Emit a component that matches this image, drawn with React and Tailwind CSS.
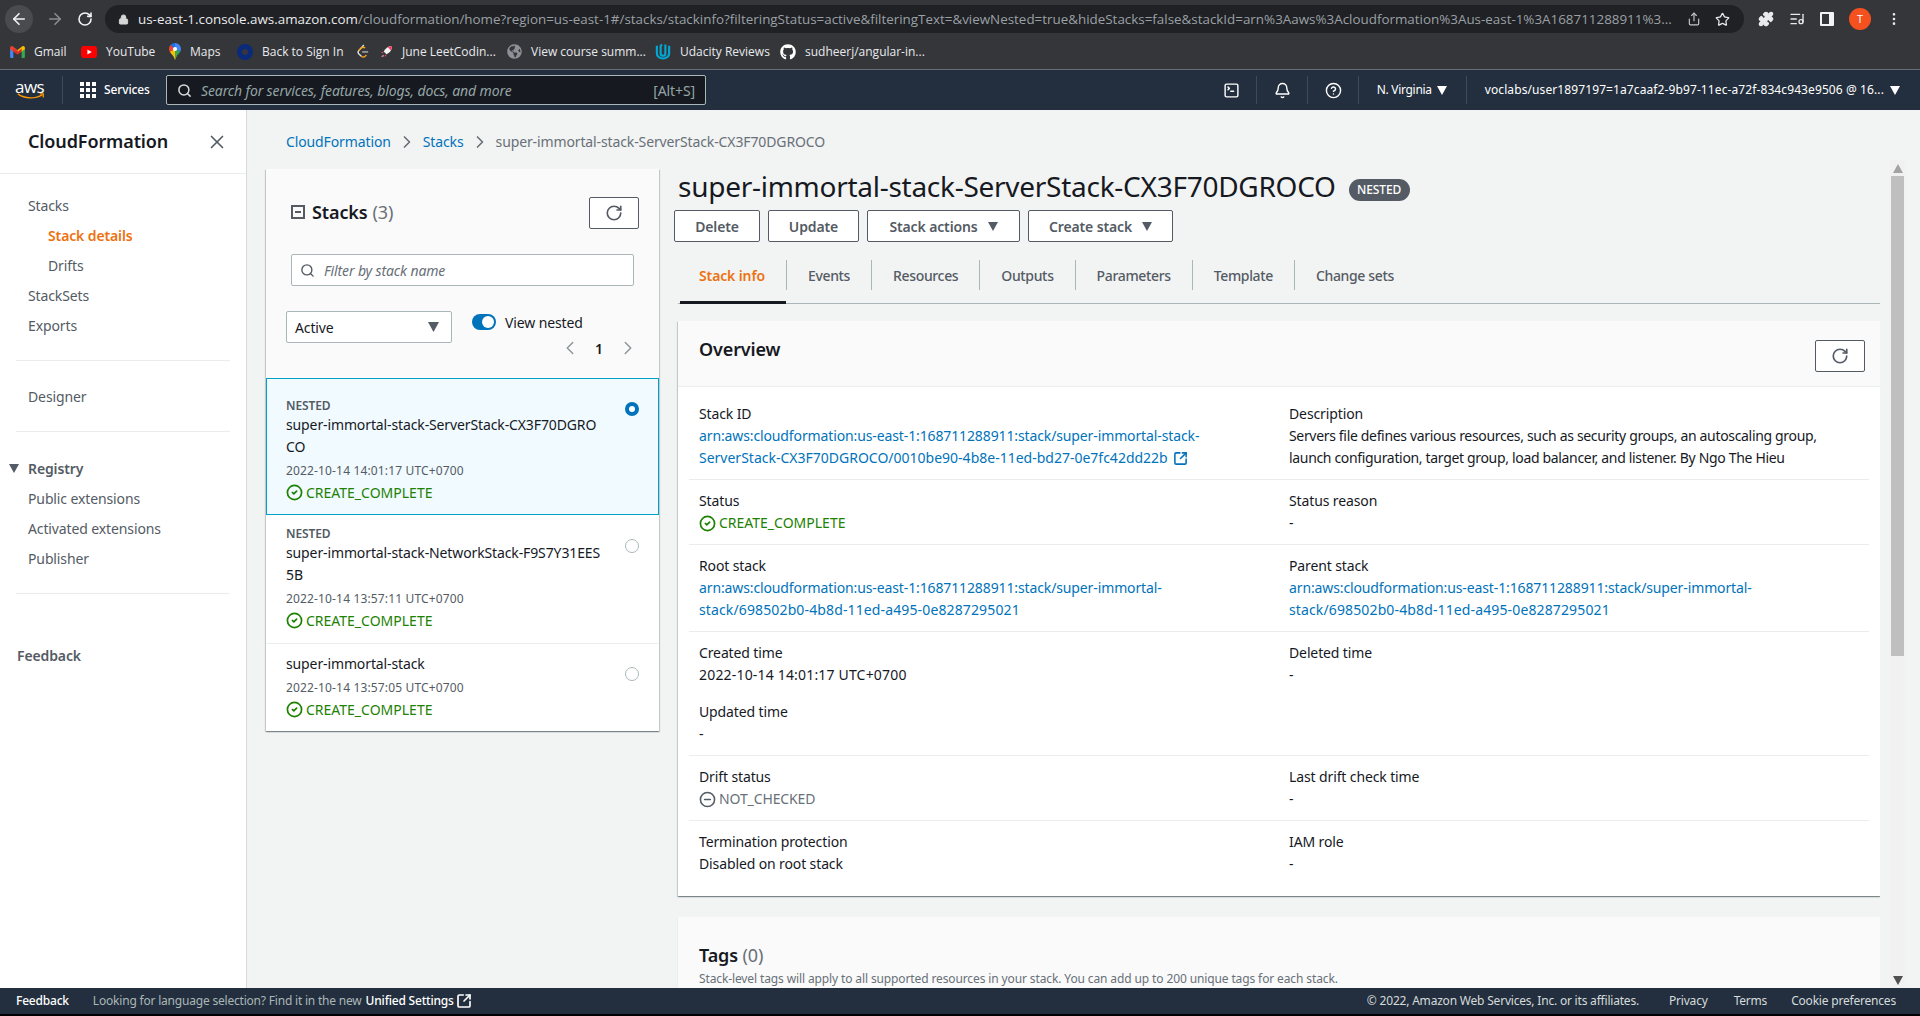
import React from 'react'
import {
  ArrowLeft, ArrowRight, RotateCw, Lock, Share, Star, Puzzle, ListMusic, MoreVertical,
  Search, X, ChevronRight, ChevronLeft, Bell, CircleHelp, SquareTerminal, SquareArrowOutUpRight, CircleCheck, CircleMinus,
} from 'lucide-react'
import { FaGithub, FaGlobeAmericas } from 'react-icons/fa'

const FONT = 'font-["Noto_Sans",sans-serif]'

const Caret = ({ className = '' }) => (
  <svg viewBox="0 0 10 9" className={`w-[10px] h-[9px] fill-current ${className}`}><path d="M0 0h10L5 9z" /></svg>
)

const GmailIcon = () => (
  <svg viewBox="0 0 16 13" className="w-[15px] h-[12px]">
    <path d="M0 2v10a1 1 0 0 0 1 1h2.5V6z" fill="#4285f4" />
    <path d="M16 2v10a1 1 0 0 1-1 1h-2.5V6z" fill="#34a853" />
    <path d="M0 2c0-1.6 1.8-2.5 3-1.5L8 4.4 8 8 3.500 6 0 3.500z" fill="#ea4335" />
    <path d="M16 2c0-1.600-1.800-2.500-3-1.500L8 4.400V8l4.500-2L16 3.500z" fill="#fbbc04" />
    <path d="M3.500 2.800 8 6.200l4.500-3.400V6L8 9.400 3.500 6z" fill="#d93025" />
  </svg>
)

const YoutubeIcon = () => (
  <svg viewBox="0 0 16 12" className="w-[16px] h-[12px]">
    <rect width="16" height="12" rx="3" fill="#f00" />
    <path d="M6.400 3.400v5.200L10.800 6z" fill="#fff" />
  </svg>
)

const MapsIcon = () => (
  <svg viewBox="0 0 12 17" className="w-[12px] h-[17px]">
    <path d="M6 0a6 6 0 0 1 6 6c0 1-.3 2-.8 2.800L6 6z" fill="#4285f4" />
    <path d="M6 0a6 6 0 0 0-4.600 2.100L6 6z" fill="#1a73e8" />
    <path d="M1.400 2.100A6 6 0 0 0 .8 8.800L6 6z" fill="#ea4335" />
    <path d="M.8 8.800C2 11 4.800 12.500 6 17l2-5-2-6z" fill="#fbbc04" />
    <path d="M11.200 8.800C10 11 7 12.500 6 17V6z" fill="#34a853" />
    <circle cx="6" cy="6" r="2.100" fill="#fff" />
  </svg>
)

const RingIcon = () => <span className="w-[16px] h-[16px] rounded-full border-[5px] border-[#0a2a7c] inline-block" />

const LeetIcon = () => (
  <svg viewBox="0 0 14 16" className="w-[12px] h-[15px]" fill="none" strokeWidth="1.600">
    <path d="M8 .5 2 7c-1 1.300-1 2.500 0 3.600L5 13.500" stroke="#e5e5e5" />
    <path d="M5 13.500c1.500 1.300 3 1.300 4.500 0L11 12" stroke="#f89f1b" />
    <path d="M2 7l3-3c1.500-1.300 3-1.300 4.500 0" stroke="#f89f1b" />
    <path d="M6 8.500h7" stroke="#b3b3b3" />
  </svg>
)

const RocketIcon = () => (
  <svg viewBox="0 0 14 14" className="w-[13px] h-[13px]">
    <path d="M13 1c-4 0-7 2-9 6l3 3c4-2 6-5 6-9z" fill="#f4f4f4" />
    <path d="M13 1c-1.800 0-3.400.4-4.800 1.200l3.600 3.600C12.600 4.400 13 2.800 13 1z" fill="#ef4665" />
    <path d="M4 7 1 8l2 1zM7 10l-1 3-1-2z" fill="#ef4665" />
    <path d="M3.500 10.500 1 13l3.500-1z" fill="#f59fb0" />
  </svg>
)

const UdacityIcon = () => (
  <svg viewBox="0 0 16 18" className="w-[16px] h-[17px]" fill="none" stroke="#02a9d6" strokeWidth="2.200">
    <path d="M1.500 3v8c0 3 2.800 5.500 6.500 5.500s6.500-2.500 6.500-5.500V3" />
    <path d="M7 1.500 5.500 3v8c0 1.500 1 2.500 2.500 2.500s2.500-1 2.500-2.500V1.500" />
  </svg>
)

const bookmarks = [
  { label: 'Gmail', icon: <GmailIcon />, width: 'w-[71px]' },
  { label: 'YouTube', icon: <YoutubeIcon />, width: 'w-[88px]' },
  { label: 'Maps', icon: <MapsIcon />, width: 'w-[68px]' },
  { label: 'Back to Sign In', icon: <RingIcon />, width: 'w-[120px]' },
  { label: 'June LeetCodin...', icon: <><LeetIcon /><span className="w-[11px]" /><RocketIcon /></>, width: 'w-[150px]' },
  { label: 'View course summ...', icon: <FaGlobeAmericas className="w-[15px] h-[15px] text-[#8d9096]" />, width: 'w-[148px]' },
  { label: 'Udacity Reviews', icon: <UdacityIcon />, width: 'w-[125px]' },
  { label: 'sudheerj/angular-in...', icon: <FaGithub className="w-[16px] h-[16px] text-white" />, width: 'w-[150px]' },
]

const BrowserChrome = () => (
  <div className="bg-[#35363a] shrink-0 h-[69px] tracking-normal font-['Open_Sans',sans-serif]">
    <div className="flex items-center h-[38px] pt-[5px] pb-[5px]">
      <div className="w-[105px] flex items-center pl-[5px] shrink-0">
        <span className="w-[28px] h-[28px] rounded-full bg-[#4a4b4f] flex items-center justify-center">
          <ArrowLeft className="w-[18px] h-[18px] text-[#f1f3f4]" strokeWidth={2.200} />
        </span>
        <ArrowRight className="w-[18px] h-[18px] ml-[13px] text-[#8b8c8f]" strokeWidth={2.200} />
        <RotateCw className="w-[16px] h-[16px] ml-[13px] text-[#f1f3f4]" strokeWidth={2.400} />
      </div>
      <div className="w-[1639px] h-[28px] rounded-full bg-[#202124] flex items-center pl-[13px] pr-[14px] shrink-0">
        <Lock className="w-[11px] h-[11px] text-[#d5d6d8] shrink-0" fill="#d5d6d8" />
        <div className="ml-[9px] text-[13.400px] leading-[20px] whitespace-nowrap text-[#9aa0a6]">
          <span className="text-[#e8eaed]">us-east-1.console.aws.amazon.com</span>/cloudformation/home?region=us-east-1#/stacks/stackinfo?filteringStatus=active&filteringText=&viewNested=true&hideStacks=false&stackId=arn%3Aaws%3Acloudformation%3Aus-east-1%3A168711288911%3...
        </div>
        <Share className="w-[14px] h-[14px] ml-auto text-[#c4c7c9] shrink-0" />
        <Star className="w-[15px] h-[15px] ml-[14px] text-[#e8eaed] shrink-0" />
      </div>
      <div className="flex items-center pl-[14px] gap-[15px] text-[#e8eaed]">
        <Puzzle className="w-[16px] h-[16px]" fill="#e8eaed" />
        <ListMusic className="w-[16px] h-[16px]" />
        <span className="w-[14px] h-[14px] border-[2px] border-[#f1f3f4] border-r-[5px] rounded-[1px]" />
        <span className="w-[22px] h-[22px] rounded-full bg-[#f4511e] text-white text-[11px] flex items-center justify-center">T</span>
        <MoreVertical className="w-[16px] h-[16px]" />
      </div>
    </div>
    <div className="flex items-center h-[27px] pl-[10px]">
      {bookmarks.map((b) => (
        <div key={b.label} className={`flex items-center shrink-0 ${b.width}`}>
          <span className="flex items-center w-auto mr-[9px]">{b.icon}</span>
          <span className="text-[12px] text-[#e8eaed] whitespace-nowrap">{b.label}</span>
        </div>
      ))}
    </div>
  </div>
)

const AwsNav = () => (
  <div className={`bg-[#232f3e] h-[41px] border-t border-[#6b6e72] shrink-0 flex items-center text-white ${FONT}`}>
    <div className="w-[62px] shrink-0 pl-[15px] flex flex-col items-start">
      <span className="text-[17px] leading-[14px] tracking-[-0.5px] font-['Open_Sans',sans-serif]">aws</span>
      <svg viewBox="0 0 32 8" className="w-[32px] h-[7px] -mt-[1px]" fill="none" stroke="#ff9900" strokeWidth="1.500">
        <path d="M1 1c8 6 20 6 28 1" /><path d="M26 1h4v4" />
      </svg>
    </div>
    <span className="w-px h-[28px] bg-[#3f4a58]" />
    <div className="w-[103px] shrink-0 pl-[17px] flex items-center">
      <span className="grid grid-cols-3 gap-[2px] w-[16px]">
        {Array.from({ length: 9 }).map((_, i) => <span key={i} className="w-[4px] h-[4px] bg-white" />)}
      </span>
      <span className="ml-[8px] text-[12px] font-medium">Services</span>
    </div>
    <div className="w-[540px] h-[30px] rounded-[2px] border border-[#aab7b8] bg-[#16191f] flex items-center pl-[10px] pr-[10px] shrink-0">
      <Search className="w-[15px] h-[15px] text-[#d5dbdb]" strokeWidth={2.400} />
      <span className="ml-[9px] text-[14px] italic text-[#95a5a6]">Search for services, features, blogs, docs, and more</span>
      <span className="ml-auto text-[14px] text-[#95a5a6]">[Alt+S]</span>
    </div>
    <div className="ml-auto flex items-center h-[28px] pr-[20px]">
      <span className="pr-[16px]"><SquareTerminal className="w-[17px] h-[17px]" /></span>
      <span className="w-px h-[28px] bg-[#3f4a58]" />
      <span className="pl-[17px] pr-[16px]"><Bell className="w-[17px] h-[17px]" /></span>
      <span className="w-px h-[28px] bg-[#3f4a58]" />
      <span className="pl-[17px] pr-[16px]"><CircleHelp className="w-[17px] h-[17px]" /></span>
      <span className="w-px h-[28px] bg-[#3f4a58]" />
      <span className="w-[107px] pl-[18px] flex items-center text-[12px] gap-[5px] whitespace-nowrap tracking-[-0.3px]">N. Virginia <Caret /></span>
      <span className="w-px h-[28px] bg-[#3f4a58]" />
      <span className="pl-[18px] flex items-center text-[12px] gap-[6px] whitespace-nowrap tracking-[0.1px]">voclabs/user1897197=1a7caaf2-9b97-11ec-a72f-834c943e9506 @ 16... <Caret /></span>
    </div>
  </div>
)

const NavItem = ({ children, active, indent }) => (
  <div className={`h-[30px] flex items-center text-[14px] ${indent ? 'pl-[48px]' : 'pl-[28px]'} ${active ? 'text-[#ec7211] font-semibold' : 'text-[#545b64]'}`}>{children}</div>
)

const Sidebar = () => (
  <div className="w-[247px] shrink-0 bg-white border-r border-[#d5dbdb] flex flex-col">
    <div className="h-[64px] shrink-0 border-b border-[#eaeded] flex items-center pl-[28px] pr-[18px] justify-between">
      <span className="text-[18px] font-semibold text-[#16191f]">CloudFormation</span>
      <X className="w-[22px] h-[22px] text-[#545b64]" strokeWidth={1.800} />
    </div>
    <div className="pt-[16px]">
      <NavItem>Stacks</NavItem>
      <NavItem active indent>Stack details</NavItem>
      <NavItem indent>Drifts</NavItem>
      <NavItem>StackSets</NavItem>
      <NavItem>Exports</NavItem>
    </div>
    <div className="mx-[16px] mt-[20px] border-t border-[#eaeded]" />
    <div className="pt-[20px]"><NavItem>Designer</NavItem></div>
    <div className="mx-[16px] mt-[20px] border-t border-[#eaeded]" />
    <div className="pt-[21px]">
      <div className="h-[30px] flex items-center pl-[9px] text-[14px] font-semibold text-[#545b64]">
        <Caret className="w-[10px] mr-[9px]" />Registry
      </div>
      <NavItem>Public extensions</NavItem>
      <NavItem>Activated extensions</NavItem>
      <NavItem>Publisher</NavItem>
    </div>
    <div className="mx-[16px] mt-[20px] border-t border-[#eaeded]" />
    <div className="pl-[17px] mt-[51px] text-[14px] font-semibold leading-[22px] text-[#545b64]">Feedback</div>
  </div>
)

const Status = () => (
  <div className="flex items-center h-[22px] text-[14px] tracking-normal text-[#1d8102]">
    <CircleCheck className="w-[17px] h-[17px] mr-[3px]" strokeWidth={2.400} />CREATE_COMPLETE
  </div>
)

const StackRow = ({ nested, name, tail, date, selected, box, radio }) => (
  <div className={`flex pl-[19px] pr-[19px] ${box} ${selected ? 'bg-[#f1faff] border border-[#00a1c9]' : 'bg-white border-x border-transparent'}`}>
    <div className="w-[340px] text-[#16191f]">
      {nested && <div className="text-[12px] leading-[16px] font-semibold text-[#545b64]">NESTED</div>}
      <div className="text-[14px] leading-[22px] break-all">{name}{tail && <br />}{tail}</div>
      <div className="text-[12px] leading-[20px] mt-[3px] tracking-[0.15px] text-[#545b64]">{date}</div>
      <Status />
    </div>
    <span className={`ml-auto w-[14px] h-[14px] rounded-full shrink-0 ${radio} ${selected ? 'border-[4px] border-[#0073bb] bg-white' : 'border border-[#aab7b8] bg-white'}`} />
  </div>
)

const RefreshButton = () => (
  <span className="w-[50px] h-[32px] border border-[#545b64] rounded-[2px] bg-white flex items-center justify-center shrink-0">
    <RotateCw className="w-[18px] h-[18px] text-[#545b64]" strokeWidth={2.200} />
  </span>
)

const StacksPanel = () => (
  <div className="w-[393px] shrink-0 self-start bg-[#fafafa] shadow-[0_1px_1px_0_rgba(0,28,36,0.3),1px_1px_1px_0_rgba(0,28,36,0.15),-1px_1px_1px_0_rgba(0,28,36,0.15)]">
    <div className="pl-[25px] pr-[20px] pt-[28px] flex items-center justify-between">
      <div className="flex items-center -mt-[2px]">
        <span className="w-[14px] h-[14px] border-[2px] border-[#545b64] flex items-center justify-center mr-[7px]"><span className="w-[6px] h-[2px] bg-[#545b64]" /></span>
        <span className="text-[18px] font-semibold text-[#16191f]">Stacks</span>
        <span className="text-[18px] text-[#687078] ml-[5px]">(3)</span>
      </div>
      <RefreshButton />
    </div>
    <div className="pl-[25px] pr-[25px] mt-[25px]">
      <div className="h-[32px] w-[343px] border border-[#aab7b8] rounded-[2px] bg-white flex items-center pl-[8px]">
        <Search className="w-[15px] h-[15px] text-[#545b64]" strokeWidth={2.200} />
        <span className="ml-[9px] text-[14px] italic text-[#687078]">Filter by stack name</span>
      </div>
    </div>
    <div className="pl-[20px] pr-[20px] mt-[25px] flex h-[67px]">
      <div className="w-[166px] h-[32px] border border-[#aab7b8] rounded-[2px] bg-white flex items-center justify-between pl-[8px] pr-[12px] text-[14px] text-[#16191f]">
        Active<Caret className="w-[11px] h-[10px] text-[#545b64]" />
      </div>
      <div className="ml-[20px] flex-1 flex flex-col">
        <div className="flex items-center h-[22px]">
          <span className="w-[24px] h-[16px] rounded-full bg-[#0073bb] flex items-center justify-end pr-[2px]"><span className="w-[12px] h-[12px] rounded-full bg-white" /></span>
          <span className="ml-[9px] text-[14px] text-[#16191f]">View nested</span>
        </div>
        <div className="mt-[4px] flex items-center justify-end gap-[11px] text-[#687078]">
          <ChevronLeft className="w-[22px] h-[22px] text-[#879596]" strokeWidth={1.500} />
          <span className="w-[14px] text-center text-[14px] font-semibold text-[#16191f]">1</span>
          <ChevronRight className="w-[22px] h-[22px] text-[#879596]" strokeWidth={1.500} />
        </div>
      </div>
    </div>
    <StackRow selected nested box="pt-[19px] pb-[11px]" radio="mt-[4px]" name="super-immortal-stack-ServerStack-CX3F70DGRO" tail="CO" date="2022-10-14 14:01:17 UTC+0700" />
    <StackRow nested box="pt-[11px] pb-[12px] border-b border-b-[#eaeded]" radio="mt-[13px]" name="super-immortal-stack-NetworkStack-F9S7Y31EES" tail="5B" date="2022-10-14 13:57:11 UTC+0700" />
    <StackRow box="pt-[9px] pb-[11px]" radio="mt-[14px]" name="super-immortal-stack" date="2022-10-14 13:57:05 UTC+0700" />
  </div>
)

const Field = ({ label, children, className = '' }) => (
  <div className={`text-[14px] leading-[22px] text-[#16191f] ${className}`}>
    <div>{label}</div>
    <div>{children}</div>
  </div>
)

const Row = ({ children, first, last, pb = 'pb-[10px]' }) => (
  <div className={`grid grid-cols-[590px_1fr] pl-[10px] ${first ? 'pt-[16px]' : 'pt-[10px]'} ${pb} ${last ? '' : 'border-b border-[#eaeded]'}`}>{children}</div>
)

const Button = ({ children, w }) => (
  <span className={`h-[32px] border border-[#545b64] rounded-[2px] bg-white flex items-center justify-center gap-[10px] text-[14px] font-semibold text-[#545b64] ${w}`}>{children}</span>
)

const tabs = ['Events', 'Resources', 'Outputs', 'Parameters', 'Template', 'Change sets']

const Overview = () => (
  <div className="bg-white shadow-[0_1px_1px_0_rgba(0,28,36,0.3),1px_1px_1px_0_rgba(0,28,36,0.15),-1px_1px_1px_0_rgba(0,28,36,0.15)]">
    <div className="h-[66px] bg-[#fafafa] border-b border-[#eaeded] flex items-center justify-between pl-[21px] pr-[15px]">
      <span className="text-[18px] font-semibold text-[#16191f] mb-[8px]">Overview</span>
      <span className="mt-[5px]"><RefreshButton /></span>
    </div>
    <div className="px-[11px]">
      <Row first>
        <Field label="Stack ID">
          <span className="text-[#0073bb]">arn:aws:cloudformation:us-east-1:168711288911:stack/super-immortal-stack-<br /><span className="tracking-normal">ServerStack-CX3F70DGROCO/0010be90-4b8e-11ed-bd27-0e7fc42dd22b</span> <SquareArrowOutUpRight className="inline w-[15px] h-[15px] ml-[2px] -mt-[2px]" strokeWidth={2.500} /></span>
        </Field>
        <Field label="Description">
          <span className="tracking-[-0.33px]">Servers file defines various resources, such as security groups, an autoscaling group,<br />launch configuration, target group, load balancer, and listener. By Ngo The Hieu</span>
        </Field>
      </Row>
      <Row>
        <Field label="Status"><Status /></Field>
        <Field label="Status reason">-</Field>
      </Row>
      <Row>
        <Field label="Root stack"><span className="text-[#0073bb]">arn:aws:cloudformation:us-east-1:168711288911:stack/super-immortal-<br /><span className="tracking-[0.13px]">stack/698502b0-4b8d-11ed-a495-0e8287295021</span></span></Field>
        <Field label="Parent stack"><span className="text-[#0073bb]">arn:aws:cloudformation:us-east-1:168711288911:stack/super-immortal-<br /><span className="tracking-[0.13px]">stack/698502b0-4b8d-11ed-a495-0e8287295021</span></span></Field>
      </Row>
      <Row>
        <div>
          <Field label="Created time"><span className="tracking-[0.18px]">2022-10-14 14:01:17 UTC+0700</span></Field>
          <Field label="Updated time" className="mt-[15px]">-</Field>
        </div>
        <Field label="Deleted time">-</Field>
      </Row>
      <Row>
        <Field label="Drift status">
          <span className="flex items-center text-[#687078]"><CircleMinus className="w-[17px] h-[17px] mr-[3px] text-[#545b64]" strokeWidth={2.200} />NOT_CHECKED</span>
        </Field>
        <Field label="Last drift check time">-</Field>
      </Row>
      <Row last pb="pb-[21px]">
        <Field label="Termination protection">Disabled on root stack</Field>
        <Field label="IAM role">-</Field>
      </Row>
    </div>
  </div>
)

const DetailColumn = () => (
  <div className="flex-1 min-w-0">
    <div className="flex items-center h-[41px] pb-[8px]">
      <h1 className="text-[28px] leading-[36px] font-normal text-[#16191f] whitespace-nowrap tracking-[-0.27px]">super-immortal-stack-ServerStack-CX3F70DGROCO</h1>
      <span className="ml-[13px] mt-[8px] h-[22px] w-[61px] rounded-full bg-[#545b64] text-white text-[12px] font-medium flex items-center justify-center">NESTED</span>
    </div>
    <div className="flex gap-[8px] -ml-[4px]">
      <Button w="w-[86px]">Delete</Button>
      <Button w="w-[91px]">Update</Button>
      <Button w="w-[153px]">Stack actions <Caret /></Button>
      <Button w="w-[145px]">Create stack <Caret /></Button>
    </div>
    <div className="mt-[18px] h-[44px] flex items-start border-b border-[#aab7b8]">
      <div className="w-[106px] ml-[2px] h-[44px] border-b-[3px] border-[#16191f] -mb-px">
        <div className="h-[30px] flex items-center pl-[19px] text-[14px] font-semibold text-[#ec7211]">Stack info</div>
      </div>
      {tabs.map((t) => (
        <div key={t} className="h-[30px] flex items-center px-[21px] border-l border-[#aab7b8] text-[14px] font-medium tracking-[-0.35px] text-[#545b64] whitespace-nowrap">{t}</div>
      ))}
    </div>
    <div className="mt-[17px]"><Overview /></div>
    <div className="mt-[21px] bg-[#fafafa] h-[100px] pl-[21px] pt-[26px] shadow-[0_1px_1px_0_rgba(0,28,36,0.15)]">
      <div className="text-[18px] leading-[24px] font-semibold text-[#16191f]">Tags <span className="font-normal text-[#687078]">(0)</span></div>
      <div className="text-[12px] leading-[18px] mt-[3px] text-[#687078]">Stack-level tags will apply to all supported resources in your stack. You can add up to 200 unique tags for each stack.</div>
    </div>
  </div>
)

const Scrollbar = () => (
  <div className="w-[15px] shrink-0 bg-[#f1f1f1] flex flex-col items-center">
    <div className="h-[16px] flex items-center justify-center text-[#a3a3a3]"><Caret className="w-[8px] h-[5px] rotate-180" /></div>
    <div className="w-[13px] h-[480px] bg-[#bfbfbf]" />
    <div className="flex-1" />
    <div className="h-[16px] flex items-center justify-center text-[#505050]"><Caret className="w-[8px] h-[5px]" /></div>
  </div>
)

const Footer = () => (
  <div className={`h-[28px] shrink-0 border-b-[2px] border-black bg-[#232f3e] flex items-center pl-[16px] pr-[24px] text-[12px] tracking-[-0.2px] ${FONT}`}>
    <span className="text-white font-medium">Feedback</span>
    <span className="ml-[24px] text-[#aab7b8]">Looking for language selection? Find it in the new</span>
    <span className="ml-[4px] text-white font-medium">Unified Settings</span>
    <SquareArrowOutUpRight className="ml-[2px] w-[16px] h-[16px] text-white" strokeWidth={2.500} />
    <span className="ml-auto text-[#d5dbdb]">© 2022, Amazon Web Services, Inc. or its affiliates.</span>
    <span className="ml-[30px] text-[#d5dbdb]">Privacy</span>
    <span className="ml-[26px] text-[#d5dbdb]">Terms</span>
    <span className="ml-[24px] text-[#d5dbdb]">Cookie preferences</span>
  </div>
)

export default function App() {
  return (
    <div className={`h-screen overflow-hidden flex flex-col tracking-[-0.12px] ${FONT}`}>
      <BrowserChrome />
      <AwsNav />
      <div className="flex-1 flex min-h-0 overflow-hidden">
        <Sidebar />
        <div className="flex-1 min-w-0 bg-[#f2f3f3] flex">
          <div className="w-[1633px] shrink-0 pl-[19px] overflow-hidden">
            <div className="h-[59px] pt-[4px] flex items-center pl-[20px] text-[14px]">
              <span className="text-[#0073bb]">CloudFormation</span>
              <ChevronRight className="w-[20px] h-[20px] mx-[6px] text-[#687078]" />
              <span className="text-[#0073bb]">Stacks</span>
              <ChevronRight className="w-[20px] h-[20px] mx-[6px] text-[#687078]" />
              <span className="text-[#687078]">super-immortal-stack-ServerStack-CX3F70DGROCO</span>
            </div>
            <div className="flex gap-[19px]">
              <StacksPanel />
              <DetailColumn />
            </div>
          </div>
          <div className="pl-[10px] pt-[50px] flex"><Scrollbar /></div>
        </div>
      </div>
      <Footer />
    </div>
  )
}
